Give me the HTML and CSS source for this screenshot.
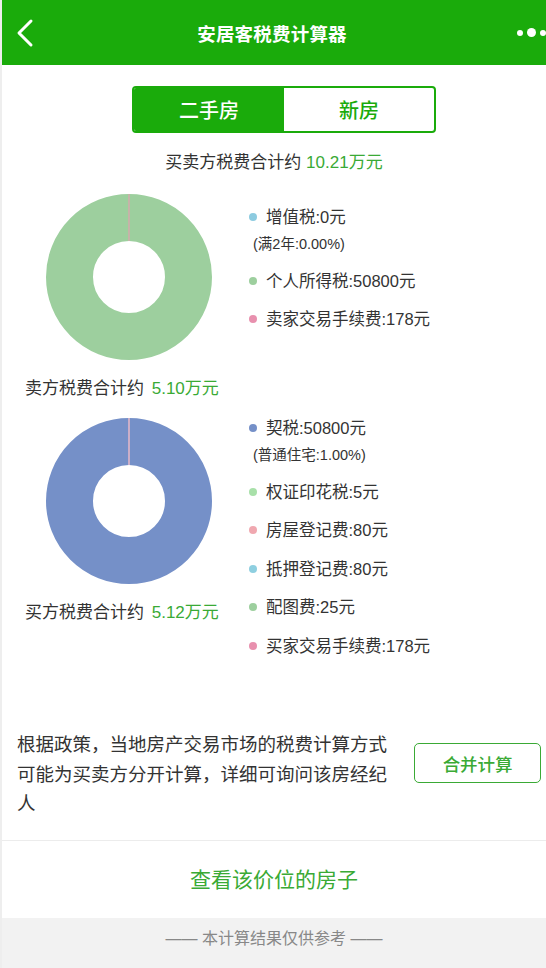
FILE: index.html
```html
<!DOCTYPE html>
<html lang="zh-CN">
<head>
<meta charset="utf-8">
<title>安居客税费计算器</title>
<link rel="stylesheet" href="styles.css">
</head>
<body>
<div class="page">
  <header class="topbar">
    <svg class="back" width="20" height="30" viewBox="0 0 20 30"><path d="M15 3 L3 15 L15 27" fill="none" stroke="#fff" stroke-width="3" stroke-linecap="round" stroke-linejoin="round"/></svg>
    <h1 class="title">安居客税费计算器</h1>
    <div class="more"><span class="d s"></span><span class="d l"></span><span class="d s"></span></div>
  </header>

  <div class="tabs">
    <div class="tab active">二手房</div>
    <div class="tab">新房</div>
  </div>

  <p class="grand">买卖方税费合计约 <span class="g">10.21万元</span></p>

  <section class="group">
    <div class="chartcol">
      <svg class="donut" width="166" height="166" viewBox="0 0 166 166">
        <circle cx="83" cy="83" r="59.5" fill="none" stroke="#9dcf9e" stroke-width="47"/>
        <line x1="83" y1="0" x2="83" y2="47" stroke="#e3a0b0" stroke-width="1.2"/>
      </svg>
      <p class="caption">卖方税费合计约 <span class="g">5.10万元</span></p>
    </div>
    <ul class="legend first">
      <li><i class="dot" style="background:#8dcbe0"></i>增值税:0元<span class="note">(满2年:0.00%)</span></li>
      <li><i class="dot" style="background:#9dcf9e"></i>个人所得税:50800元</li>
      <li><i class="dot" style="background:#e890ae"></i>卖家交易手续费:178元</li>
    </ul>
  </section>

  <section class="group second">
    <div class="chartcol">
      <svg class="donut" width="166" height="166" viewBox="0 0 166 166">
        <circle cx="83" cy="83" r="59.5" fill="none" stroke="#7590c8" stroke-width="47"/>
        <line x1="83" y1="0" x2="83" y2="47" stroke="#e8b8c8" stroke-width="1.5"/>
      </svg>
      <p class="caption">买方税费合计约 <span class="g">5.12万元</span></p>
    </div>
    <ul class="legend">
      <li><i class="dot" style="background:#7590c8"></i>契税:50800元<span class="note">(普通住宅:1.00%)</span></li>
      <li><i class="dot" style="background:#a8e0a9"></i>权证印花税:5元</li>
      <li><i class="dot" style="background:#f0a8b0"></i>房屋登记费:80元</li>
      <li><i class="dot" style="background:#8ecfe0"></i>抵押登记费:80元</li>
      <li><i class="dot" style="background:#9dcf9e"></i>配图费:25元</li>
      <li><i class="dot" style="background:#e890ae"></i>买家交易手续费:178元</li>
    </ul>
  </section>

  <div class="policy">
    <p class="policy-text">根据政策，当地房产交易市场的税费计算方式可能为买卖方分开计算，详细可询问该房经纪人</p>
    <button class="merge">合并计算</button>
  </div>

  <a class="seehouse">查看该价位的房子</a>

  <footer class="foot">—— 本计算结果仅供参考 ——</footer>
</div>
</body>
</html>
```

FILE: styles.css
```css
* { box-sizing: border-box; }
html, body { margin: 0; padding: 0; background: #fff; }
body {
  font-family: "Liberation Sans", "Noto Sans CJK SC", sans-serif;
  color: #333;
  width: 546px;
  height: 968px;
  overflow: hidden;
}
.page {
  border-left: 2px solid #eeeeee;
  min-height: 968px;
  display: flex;
  flex-direction: column;
}
.topbar {
  height: 65px;
  background: #1aab0b;
  display: grid;
  grid-template-columns: 60px 1fr 60px;
  align-items: center;
}
.back { margin-left: 14px; margin-top: 1px; }
.title {
  margin: 0;
  text-align: center;
  color: #fff;
  font-size: 18.5px;
  font-weight: bold;
  letter-spacing: 0.2px;
  padding-right: 4px;
}
.more {
  display: flex;
  align-items: center;
  justify-content: flex-end;
  gap: 4px;
  overflow: hidden;
  margin-right: 0;
}
.d { display: block; background: #fff; border-radius: 50%; flex: none; }
.d.s { width: 6px; height: 6px; }
.d.l { width: 9px; height: 9px; }

.tabs {
  margin: 21px 0 0 130px;
  width: 304px;
  height: 47px;
  border: 2px solid #1aab0b;
  border-radius: 4px;
  display: flex;
  overflow: hidden;
}
.tab {
  flex: 1;
  display: flex;
  align-items: center;
  justify-content: center;
  font-size: 20px;
  font-weight: 500;
  color: #1aab0b;
}
.tab.active { background: #1aab0b; color: #fff; }

.grand {
  margin: 18px 0 0;
  text-align: center;
  font-size: 17px;
  line-height: 24px;
}
.g { color: #3aaa35; }

.group {
  display: grid;
  grid-template-columns: 246px 1fr;
  margin-top: 19px;
}
.group.second { margin-top: 18px; }
.chartcol { display: flex; flex-direction: column; }
.donut { display: block; margin-left: 44px; }
.caption {
  margin: 18px 0 0 23px;
  font-size: 17px;
  line-height: 22px;
}
.caption .g { margin-left: 3px; }
.legend {
  list-style: none;
  margin: 0;
  padding: 0;
  font-size: 16.5px;
  margin-top: -2px;
}
.legend.first { padding-top: 13px; }
.legend li {
  position: relative;
  padding-left: 18px;
  line-height: 24px;
  margin-bottom: 14.5px;
}
.dot {
  position: absolute;
  left: 1px;
  top: 8px;
  width: 8px;
  height: 8px;
  border-radius: 50%;
}
.note {
  display: block;
  font-size: 14.5px;
  line-height: 20px;
  margin-top: 5px;
  margin-left: -13px;
}

.policy {
  display: flex;
  align-items: flex-start;
  padding: 58px 5px 21px 15px;
  border-bottom: 1px solid #ececec;
}
.policy-text {
  margin: 0;
  width: 378px;
  font-size: 18.5px;
  line-height: 29.5px;
  color: #333;
}
.merge {
  margin: 13px 0 0 20px;
  width: 127px;
  height: 40px;
  border: 1.5px solid #3aaa35;
  border-radius: 5px;
  background: #fff;
  color: #3aaa35;
  font-family: inherit;
  font-size: 17.5px;
  font-weight: 500;
  padding: 0;
}
.seehouse {
  display: block;
  height: 77px;
  line-height: 77px;
  text-align: center;
  color: #3aaa35;
  font-size: 21px;
}
.foot {
  flex: 1;
  background: #f2f2f2;
  color: #888;
  text-align: center;
  font-size: 16px;
  padding-top: 10px;
  line-height: 22px;
}
```
